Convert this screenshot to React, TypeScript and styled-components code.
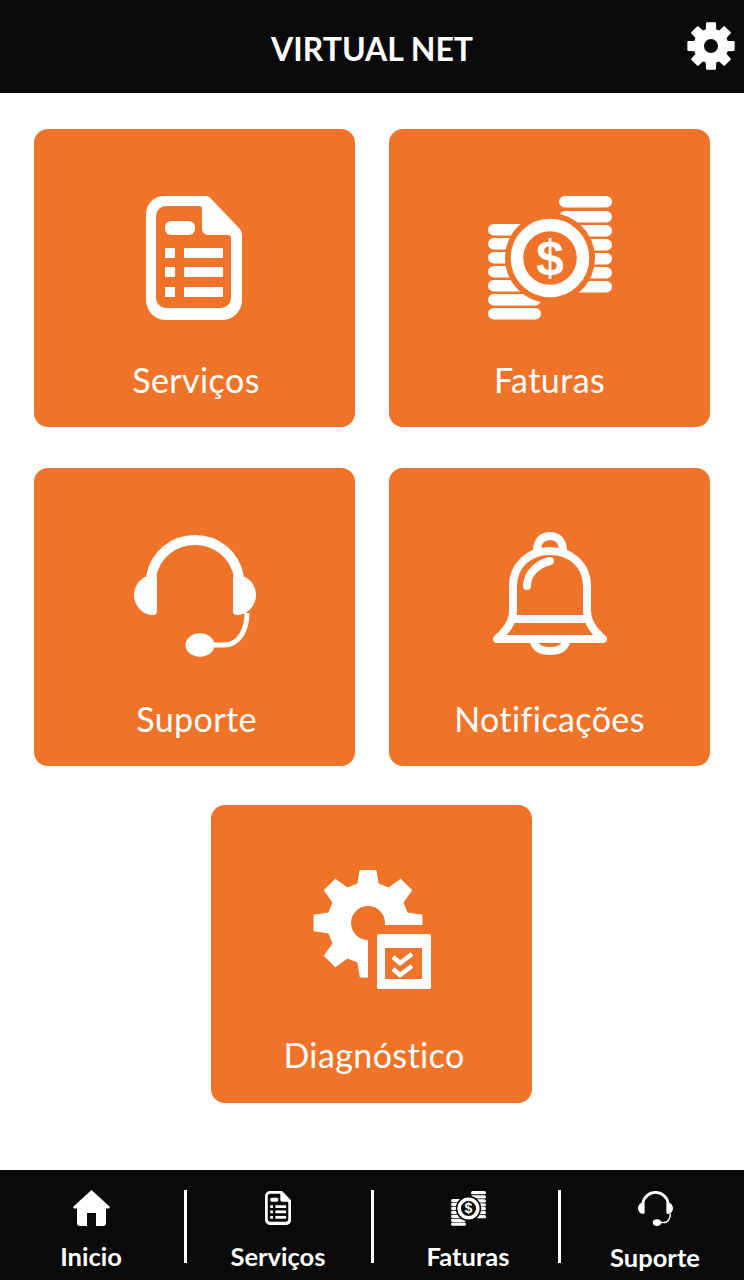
import React from "react";
import styled, { createGlobalStyle } from "styled-components";

const ORANGE = "#f0732a";
const BLACK = "#0a0a0a";

const GlobalStyle = createGlobalStyle`
  html, body {
    margin: 0;
    padding: 0;
    background: #fff;
  }
  * {
    box-sizing: border-box;
  }
`;

const Page = styled.div`
  width: 100%;
  height: 100vh;
  display: flex;
  flex-direction: column;
  overflow: hidden;
  font-family: "Lato", "Liberation Sans", sans-serif;
  background: #fff;
`;

const Header = styled.header`
  height: 93px;
  flex-shrink: 0;
  display: grid;
  grid-template-columns: 1fr auto 1fr;
  align-items: center;
  background: ${BLACK};
  color: #fff;
`;

const Title = styled.h1`
  grid-column: 2;
  margin: 5px 0 0;
  font-size: 32px;
  line-height: 40px;
  font-weight: 700;
`;

const SettingsButton = styled.div`
  grid-column: 3;
  justify-self: end;
  display: flex;
  margin: 0 9px 1px 0;
`;

const Main = styled.main`
  flex: 1;
  display: flex;
  flex-direction: column;
  padding-top: 36px;
`;

const Row = styled.div<{ $gap: number; $pr?: number }>`
  display: flex;
  justify-content: center;
  gap: 34px;
  margin-bottom: ${(p) => p.$gap}px;
  padding-right: ${(p) => p.$pr || 0}px;
`;

const Card = styled.div`
  width: 321px;
  height: 298px;
  display: flex;
  flex-direction: column;
  align-items: center;
  background: ${ORANGE};
  border-radius: 14px;
  color: #fff;
`;

const IconSlot = styled.div<{ $top: number; $pr?: number }>`
  height: 191px;
  padding-top: ${(p) => p.$top}px;
  padding-right: ${(p) => p.$pr || 0}px;
  display: flex;
  align-items: flex-start;
  justify-content: center;
`;

const CardLabel = styled.div<{ $shift?: number; $lift?: number }>`
  margin-top: ${(p) => 40 - (p.$lift || 0)}px;
  font-size: 34px;
  line-height: 40px;
  font-weight: 400;
  letter-spacing: 0.4px;
  padding-left: ${(p) => p.$shift || 0}px;
`;

const BottomNav = styled.nav`
  height: 110px;
  flex-shrink: 0;
  display: grid;
  grid-template-columns: 187px 187px 187px 183px;
  align-items: start;
  padding-top: 20px;
  background: ${BLACK};
  color: #fff;
`;

const NavItem = styled.div<{ $last?: boolean; $pl?: number; $pr?: number }>`
  height: 73px;
  display: flex;
  flex-direction: column;
  align-items: center;
  padding-left: ${(p) => p.$pl || 0}px;
  padding-right: ${(p) => p.$pr || 0}px;
  border-right: ${(p) => (p.$last ? "none" : "3px solid #fff")};
`;

const NavIcon = styled.div`
  height: 36px;
  flex-shrink: 0;
  display: flex;
  align-items: center;
  justify-content: center;
`;

const NavLabel = styled.div<{ $drop?: number }>`
  flex-shrink: 0;
  margin-top: ${(p) => 15 + (p.$drop || 0)}px;
  font-size: 25.5px;
  line-height: 30px;
  font-weight: 700;
`;

const gearPath = (c: number, outer: number, root: number, hole: number, tip: number, base: number) => {
  const pt = (deg: number, r: number) => {
    const a = ((deg - 90) * Math.PI) / 180;
    return `${(c + r * Math.cos(a)).toFixed(2)} ${(c + r * Math.sin(a)).toFixed(2)}`;
  };
  let d = "";
  for (let i = 0; i < 8; i++) {
    const a = i * 45;
    d += `${i === 0 ? "M" : "L"}${pt(a - base, root)} L${pt(a - tip, outer)} L${pt(a + tip, outer)} L${pt(a + base, root)} `;
  }
  d += `Z M${c - hole} ${c} a${hole} ${hole} 0 1 0 ${hole * 2} 0 a${hole} ${hole} 0 1 0 ${-hole * 2} 0 Z`;
  return d;
};

const SettingsIcon = () => (
  <svg width={48} height={48} viewBox="0 0 48 48" fill="#fff" stroke="#fff" strokeWidth={2} strokeLinejoin="round">
    <path fillRule="evenodd" d={gearPath(24, 23, 16.5, 8, 10, 15)} />
  </svg>
);

const DocIcon = ({ h }: { h: number }) => (
  <svg width={(h * 96) / 124} height={h} viewBox="0 0 96 124" fill="#fff">
    <path
      fillRule="evenodd"
      d="M18 0H60a6 6 0 0 1 4.4 1.9L93 32a10 10 0 0 1 3 7V104a20 20 0 0 1-20 20H20a20 20 0 0 1-20-20V18A18 18 0 0 1 18 0Z
         M20 10a10 10 0 0 0-10 10V102a10 10 0 0 0 10 10H75a10 10 0 0 0 10-10V42a3 3 0 0 0-3-3H62a6 6 0 0 1-6-6V13a3 3 0 0 0-3-3Z"
    />
    <rect x="19" y="25" width="30" height="14" rx="6" />
    <rect x="19" y="52" width="10" height="10" />
    <rect x="19" y="71" width="10" height="10" />
    <rect x="19" y="91" width="10" height="10" />
    <rect x="38" y="52" width="39" height="10" />
    <rect x="38" y="71" width="39" height="10" />
    <rect x="38" y="91" width="39" height="10" />
  </svg>
);

const CoinsIcon = ({ h, cut }: { h: number; cut: string }) => (
  <svg width={h} height={h} viewBox="0 0 124 124" fill="#fff">
    {[0, 15, 29, 43, 57, 71, 85].map((y) => (
      <rect key={y} x="71" y={y} width="53" height="11.5" rx="5.7" />
    ))}
    {[28, 42, 56, 70, 84, 98, 112].map((y) => (
      <rect key={y} x="0" y={y} width="53" height="11.5" rx="5.7" />
    ))}
    <circle cx="62" cy="62" r="45" fill={cut} />
    <circle cx="62" cy="62" r="33" fill="none" stroke="#fff" strokeWidth="12.5" />
    <text
      x="62"
      y="79"
      textAnchor="middle"
      fontSize="50"
      fontWeight="700"
      fontFamily="'Liberation Sans', sans-serif"
      fill="#fff"
    >
      $
    </text>
  </svg>
);

const HeadsetIcon = ({ h }: { h: number }) => (
  <svg width={h} height={h} viewBox="0 0 122 122" fill="#fff">
    <path d="M17 42C21 19 40 5 61 5S101 19 105 42" fill="none" stroke="#fff" strokeWidth="10" />
    <path d="M23 43V76Q23 80 19 80C8 80 0 70 0 60S8 40 19 40Q23 40 23 43Z" />
    <path d="M99 43V76Q99 80 103 80C114 80 122 70 122 60S114 40 103 40Q99 40 99 43Z" />
    <path d="M113 78C113 95 105 110 90 110H75" fill="none" stroke="#fff" strokeWidth="5" />
    <ellipse cx="66" cy="110" rx="14.5" ry="11.8" />
  </svg>
);

const BellIcon = () => (
  <svg width={114} height={123} viewBox="0 0 114 123" fill="none" stroke="#fff" strokeWidth="8" strokeLinejoin="round" strokeLinecap="round">
    <path d="M4 107C14 98 20 90 20 78V54C20 33 36 19 57 19S94 33 94 54V78C94 90 100 98 110 107Z" />
    <path d="M20 87H94" />
    <path d="M44 19C44 8 50 4 57 4S70 8 70 19" />
    <path d="M41 110C43 117 50 119 57 119S71 117 73 110" />
    <path d="M34 54C34 42 44 32 57 29" />
  </svg>
);

const DiagnosticIcon = () => (
  <svg width={118} height={119} viewBox="0 0 118 119" fill="#fff">
    <g transform="translate(0 -2)">
      <path fillRule="evenodd" d={gearPath(55, 55, 41, 17, 8.5, 15)} />
    </g>
    <rect x="55" y="55" width="63" height="64" fill={ORANGE} />
    <rect x="64" y="64" width="54" height="55" rx="2" />
    <rect x="72" y="78" width="37" height="31" fill={ORANGE} />
    <path d="M80 87L87 93L99 84M80 99L87 105L99 96" fill="none" stroke="#fff" strokeWidth="4.5" />
  </svg>
);

const HomeIcon = () => (
  <svg width={37} height={36} viewBox="0 0 37 36" fill="#fff">
    <path
      fillRule="evenodd"
      d="M18.5 0L36.5 16.5Q37.5 18.5 35 18.5H33V33Q33 36 30 36H23V23H14V36H7Q4 36 4 33V18.5H2Q-.5 18.5 .5 16.5Z"
    />
  </svg>
);

const App = () => {
  return (
    <Page>
      <GlobalStyle />
      <Header>
        <Title>VIRTUAL NET</Title>
        <SettingsButton>
          <SettingsIcon />
        </SettingsButton>
      </Header>
      <Main>
        <Row $gap={41}>
          <Card>
            <IconSlot $top={67} $pr={1}>
              <DocIcon h={124} />
            </IconSlot>
            <CardLabel $shift={3}>Serviços</CardLabel>
          </Card>
          <Card>
            <IconSlot $top={67}>
              <CoinsIcon h={124} cut={ORANGE} />
            </IconSlot>
            <CardLabel>Faturas</CardLabel>
          </Card>
        </Row>
        <Row $gap={39}>
          <Card>
            <IconSlot $top={67}>
              <HeadsetIcon h={122} />
            </IconSlot>
            <CardLabel $shift={4}>Suporte</CardLabel>
          </Card>
          <Card>
            <IconSlot $top={64}>
              <BellIcon />
            </IconSlot>
            <CardLabel>Notificações</CardLabel>
          </Card>
        </Row>
        <Row $gap={0} $pr={1}>
          <Card>
            <IconSlot $top={65}>
              <DiagnosticIcon />
            </IconSlot>
            <CardLabel $shift={5} $lift={1}>Diagnóstico</CardLabel>
          </Card>
        </Row>
      </Main>
      <BottomNav>
        <NavItem $pr={2}>
          <NavIcon>
            <HomeIcon />
          </NavIcon>
          <NavLabel>Inicio</NavLabel>
        </NavItem>
        <NavItem $pr={2}>
          <NavIcon>
            <DocIcon h={34} />
          </NavIcon>
          <NavLabel>Serviços</NavLabel>
        </NavItem>
        <NavItem $pl={4}>
          <NavIcon>
            <CoinsIcon h={35} cut={BLACK} />
          </NavIcon>
          <NavLabel>Faturas</NavLabel>
        </NavItem>
        <NavItem $last $pl={5}>
          <NavIcon>
            <HeadsetIcon h={35} />
          </NavIcon>
          <NavLabel $drop={1}>Suporte</NavLabel>
        </NavItem>
      </BottomNav>
    </Page>
  );
};

export default App;
